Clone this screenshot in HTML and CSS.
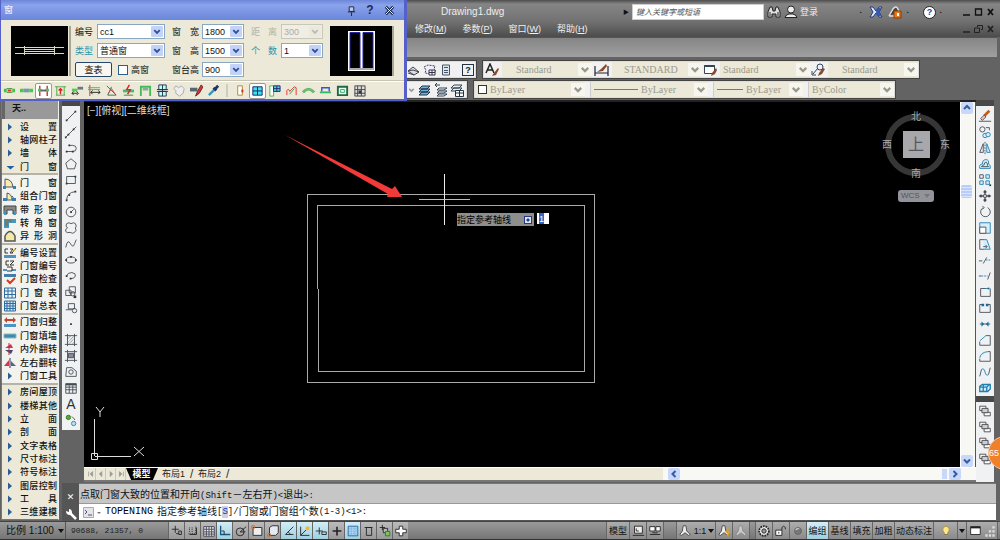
FILE: index.html
```html
<!DOCTYPE html>
<html lang="zh-CN">
<head>
<meta charset="utf-8">
<title>Drawing1.dwg</title>
<link rel="stylesheet" href="styles.css">
</head>
<body>
<svg class="defs" aria-hidden="true">
  <symbol id="chev" viewBox="0 0 12 12"><path d="M3 4.500l3 3 3-3" fill="none" stroke="currentColor" stroke-width="2"/></symbol>
  <symbol id="tri" viewBox="0 0 14 12"><path d="M5 2.500l4 3.500-4 3.500z" fill="#2b5f96"/></symbol>
  <symbol id="trid" viewBox="0 0 14 12"><path d="M3.500 5h8l-4 3.500z" fill="#1f5fa8"/></symbol>
  <symbol id="order" viewBox="0 0 16 16"><path d="M2 2.500h7v5H2zM7 9.500h7v4H7z" fill="#fff" stroke="#444"/><path d="M4.500 5h7v5h-7z" fill="#ccd" stroke="#444"/></symbol>
</svg>

<header class="top">
  <div class="titlebar">
    <h1>Drawing1.dwg</h1>
    <span class="flag">▶</span>
    <input class="search" type="text" aria-label="搜索" placeholder="键入关键字或短语">
    <button class="plain" aria-label="搜索"><svg width="14" height="14"><path d="M1 12V7l2-5h2l1 4h2l1-4h2l2 5v5H9V9H5v3z" fill="#ddd" stroke="#222"/><path d="M3 7v4M11 7v4" stroke="#222"/></svg></button>
    <button class="plain login"><svg width="14" height="14"><circle cx="7" cy="4.500" r="3.500" fill="#eee" stroke="#222"/><path d="M1 12.500q1-3 4-3.500h4q3 .5 4 3.500z" fill="#eee" stroke="#222"/></svg>登录</button>
    <div class="titletools">
      <span>▪</span>
      <button class="plain" aria-label="Exchange"><svg width="14" height="12"><path d="M1 1h3l3 4 3-4h3l-3 5 3 5h-3L7 7l-3 4H1l3-5z" fill="#dbe6ff" stroke="#223a78"/><path d="M8 2h4l-2 4 2 4H8L7 6z" fill="#3558b0"/></svg></button>
      <button class="plain" aria-label="保持连接"><svg width="15" height="14"><path d="M1 11l4-7q3-4 5 0l1 3M1 11h6" stroke="#ddd" fill="#444" stroke-width="1.500"/><path d="M6 6h7v7H6z" fill="#e8791c" stroke="#8a3d00"/><path d="M9 8h2v3H9z" fill="#fff"/></svg></button>
      <span>▪</span>
      <button class="plain helpbtn" aria-label="帮助">?</button>
      <span>▪</span>
    </div>
    <div class="winbtns"><button aria-label="最小化"><svg width="9" height="10"><path d="M1 8h7" stroke="#111" stroke-width="1.500"/></svg></button><button aria-label="最大化"><svg width="9" height="10"><path d="M1.500 2h6v6h-6z" fill="none" stroke="#111" stroke-width="1.300"/></svg></button><button aria-label="关闭"><svg width="9" height="10"><path d="M2 2l5 6M7 2L2 8" stroke="#111" stroke-width="1.800"/></svg></button></div>
  </div>
  <nav class="menubar">
    <a href="#">修改(<u>M</u>)</a><a href="#">参数(<u>P</u>)</a><a href="#">窗口(<u>W</u>)</a><a href="#">帮助(<u>H</u>)</a>
    <div class="winbtns"><button aria-label="最小化绘图"><svg width="9" height="10"><path d="M1 8h7" stroke="#222" stroke-width="1.500"/></svg></button><button aria-label="还原绘图"><svg width="9" height="10"><path d="M3.500 3V1.500h5v4H7M.5 4h5v4.500h-5z" fill="none" stroke="#222"/></svg></button><button aria-label="关闭绘图"><svg width="9" height="10"><path d="M2 2l5 6M7 2L2 8" stroke="#222" stroke-width="1.800"/></svg></button></div>
  </nav>
  <div class="strip"></div>
  <div class="bars">
    <div class="barrow">
      <div class="seg first">
        <button aria-label="标记"><svg width="13" height="12"><path d="M1 7l5-4 6 5-5 3zM1 7l5-1 6 2M1 9l6 2" fill="#ddd" stroke="#445"/></svg></button>
        <button aria-label="图纸集"><svg width="14" height="12"><path d="M1 3l4-2 7 1-1 3 2 2-5 3-6-1 1-3z" fill="#eef" stroke="#445" stroke-dasharray="2 1"/><path d="M6 6h6v5H6z" fill="#fff" stroke="#334"/><path d="M6 8.500h6M9 6v5" stroke="#334"/></svg></button>
        <button aria-label="计算器"><svg width="12" height="12"><path d="M2.500 1h7v10h-7z" fill="#dfe6ee" stroke="#456"/><path d="M4 3.500h4M4 6.500h4M4 8.500h4" stroke="#456"/></svg></button>
        <button class="bhelp" aria-label="帮助主题">?</button>
      </div>
      <div class="seg">
        <svg class="ic" width="15" height="14"><path d="M1 10L5 1l4 9M2.500 7h5" fill="none" stroke="#222" stroke-width="1.500"/><path d="M13 5l-4 5-2 3 4-1 3-6z" fill="#8a4a2a"/></svg>
        <span class="dd w90 in14"><select disabled aria-label="文字样式"><option>Standard</option></select><svg><use href="#chev"/></svg></span>
        <svg class="ic" width="17" height="14"><path d="M2 3v10M15 3v10M2 10h13" stroke="#223" stroke-width="1.200"/><path d="M13 1L8 6 4 9l6-1 4-5z" fill="#8a4a2a"/></svg>
        <span class="dd w90 in12"><select disabled aria-label="标注样式"><option>STANDARD</option></select><svg><use href="#chev"/></svg></span>
        <svg class="ic" width="15" height="14"><path d="M1.500 2.500h10v8h-10z" fill="#fff" stroke="#345"/><path d="M1.500 3h10" stroke="#345" stroke-width="2"/><path d="M13 5l-4 5-1 3 4-2 2-4z" fill="#8a4a2a"/></svg>
        <span class="dd w90"><select disabled aria-label="表格样式"><option>Standard</option></select><svg><use href="#chev"/></svg></span>
        <svg class="ic" width="15" height="14"><circle cx="9" cy="4" r="3" fill="#eef" stroke="#345"/><path d="M7 5l-5 6M1 8v4h4" stroke="#345" fill="none"/><path d="M12 5l-4 5-1 3 4-2 3-5z" fill="#8a4a2a"/></svg>
        <span class="dd w90 in14"><select disabled aria-label="多重引线样式"><option>Standard</option></select><svg><use href="#chev"/></svg></span>
      </div>
    </div>
    <div class="barrow">
      <div class="seg second">
        <svg class="tailchev"><use href="#chev"/></svg>
        <button aria-label="图层置为当前"><svg width="14" height="14"><path d="M4 3h8l-3 3H1zM4 6h8l-3 3H1zM4 9h8l-3 3H1z" fill="#6db3de" stroke="#234"/></svg></button>
        <button aria-label="上一个图层"><svg width="14" height="14"><path d="M5 5h8l-3 2H3zM5 8h8l-3 2H3zM5 11h8l-3 2H3zM1 2h5M1 2l2-2M1 2l2 2" fill="#fff" stroke="#345"/></svg></button>
        <button aria-label="图层状态"><svg width="14" height="14"><path d="M4 2h8l-3 3H1zM4 5h8l-3 3H1z" fill="#eee" stroke="#345"/><path d="M5.500 7.500h8v6h-8z" fill="#fff" stroke="#234"/><path d="M5 10h8M9.500 7v6" stroke="#234"/></svg></button>
      </div>
      <div class="seg">
        <span class="dd w110 swatch"><i></i><select disabled aria-label="颜色"><option>ByLayer</option></select><svg><use href="#chev"/></svg></span>
        <span class="dd w118"><b></b><select disabled aria-label="线型"><option>ByLayer</option></select><svg><use href="#chev"/></svg></span>
        <span class="dd w90"><b class="short"></b><select disabled aria-label="线宽"><option>ByLayer</option></select><svg><use href="#chev"/></svg></span>
        <span class="dd w86"><select disabled aria-label="打印样式"><option>ByColor</option></select><svg><use href="#chev"/></svg></span>
      </div>
    </div>
  </div>
</header>

<main class="work">
  <aside class="side">
    <h2>天..</h2>
    <div class="sidebody">
      <div class="grp g4 warm">
        <button><svg><use href="#tri"/></svg><span>设 置</span></button>
        <button><svg><use href="#tri"/></svg><span>轴网柱子</span></button>
        <button><svg><use href="#tri"/></svg><span>墙 体</span></button>
        <button><svg><use href="#trid"/></svg><span>门 窗</span></button>
      </div>
      <div class="grp g5">
        <button><svg viewBox="0 0 14 12"><path d="M2 10V2q7 0 8 8z" fill="#f7edb0" stroke="#556"/><path d="M0 9h3v3H0zM10 9h3v3h-3z" fill="#3d7fa8"/></svg><span>门 窗</span></button>
        <button><svg viewBox="0 0 14 12"><path d="M4 10V3q5 1 5 7zM9 6l3 4" fill="#f7edb0" stroke="#556"/><path d="M0 8h4v3H0zM9 8h4v3H9z" fill="#3d7fa8"/></svg><span>组合门窗</span></button>
        <button><svg viewBox="0 0 14 12"><path d="M1 2h12v8h-3V6H4v4H1z" fill="#888" stroke="#444"/><path d="M1 7h2v4H1zM11 7h2v4h-2z" fill="#3b9ac4"/></svg><span>带 形 窗</span></button>
        <button><svg viewBox="0 0 14 12"><path d="M1 2h12v4H6v5H1z" fill="#4796bd"/><path d="M2 2h7v3H5v4H2z" fill="#7a7a66"/></svg><span>转 角 窗</span></button>
        <button><svg viewBox="0 0 14 12"><path d="M2 11V6q5-9 10 0v5z" fill="#f5e9a8" stroke="#555" stroke-width="1.500"/></svg><span>异 形 洞</span></button>
      </div>
      <div class="grp g5">
        <button><svg viewBox="0 0 14 12"><path d="M1 8h12v3H1z" fill="#4f93c2"/><path d="M5 2H2v4h3M7 2h3L7 6h3M9 6l4-5" fill="none" stroke="#333"/><path d="M12 1l1 2-3 2z" fill="#e4b81f"/></svg><span>编号设置</span></button>
        <button><svg viewBox="0 0 14 12"><path d="M0 9h4v2H0zM9 9h4v2H9z" fill="#4f93c2"/><path d="M6 1H3v4h3M7 1h4L7 5h4M4 7h5v4H4" fill="none" stroke="#333"/></svg><span>门窗编号</span></button>
        <button><svg viewBox="0 0 14 12"><path d="M1 1h12v3H1z" fill="#3f7fa8"/><path d="M4 7l3 3 5-5" fill="none" stroke="#d23a1c" stroke-width="2"/></svg><span>门窗检查</span></button>
        <button><svg viewBox="0 0 14 12"><path d="M1.500 1h11v10h-11zM1 4h12M1 7.500h12M5 1v10M9 1v10" fill="#e8f3fb" stroke="#2e6ca0"/></svg><span>门 窗 表</span></button>
        <button><svg viewBox="0 0 14 12"><path d="M1.500 1h11v10h-11zM1 3.500h12M1 6h12M1 8.500h12M4 1v10M7 1v10M10 1v10" fill="#d5e8f6" stroke="#2e6ca0"/></svg><span>门窗总表</span></button>
      </div>
      <div class="grp g5">
        <button><svg viewBox="0 0 14 12"><path d="M1 8h12v3H1z" fill="#4f93c2"/><path d="M1 4l3-3v2h6V1l3 3-3 3V5H4v2z" fill="#c9402a"/></svg><span>门窗归整</span></button>
        <button><svg viewBox="0 0 14 12"><path d="M1 4h12v4H1z" fill="#3f88b0" stroke="#8bb"/></svg><span>门窗填墙</span></button>
        <button><svg viewBox="0 0 14 12"><path d="M2 5h8L8 1z" fill="#d7344a"/><path d="M2 7h8l-2 4z" fill="#447"/><path d="M6 0v12" stroke="#a34"/></svg><span>内外翻转</span></button>
        <button><svg viewBox="0 0 14 12"><path d="M1 9h5V3z" fill="#d7344a"/><path d="M8 9h5L8 4z" fill="#4a6a88"/><path d="M7 1v10" stroke="#336"/></svg><span>左右翻转</span></button>
        <button><svg><use href="#tri"/></svg><span>门窗工具</span></button>
      </div>
      <div class="grp g10 warm">
        <button><svg><use href="#tri"/></svg><span>房间屋顶</span></button>
        <button><svg><use href="#tri"/></svg><span>楼梯其他</span></button>
        <button><svg><use href="#tri"/></svg><span>立 面</span></button>
        <button><svg><use href="#tri"/></svg><span>剖 面</span></button>
        <button><svg><use href="#tri"/></svg><span>文字表格</span></button>
        <button><svg><use href="#tri"/></svg><span>尺寸标注</span></button>
        <button><svg><use href="#tri"/></svg><span>符号标注</span></button>
        <button><svg><use href="#tri"/></svg><span>图层控制</span></button>
        <button><svg><use href="#tri"/></svg><span>工 具</span></button>
        <button><svg><use href="#tri"/></svg><span>三维建模</span></button>
      </div>
    </div>
  </aside>

  <div class="center">
    <div class="upper">
      <div class="vbar drawbar">
        <button aria-label="直线"><svg viewBox="0 0 16 16"><path d="M3 13L13 3"/><path d="M2 12h2v2H2zM12 2h2v2h-2z" class="dot"/></svg></button>
        <button aria-label="构造线"><svg viewBox="0 0 16 16"><path d="M2 14L14 2"/><path d="M4 10h2v2H4zM10 4h2v2h-2zM1 13h2v2H1z" class="dot"/></svg></button>
        <button aria-label="多段线"><svg viewBox="0 0 16 16"><path d="M3 12h7a4 3.500 0 0 0 0-7H6"/><path d="M2 11h2v2H2zM5 4h2v2H5zM9 11h2v2H9z" class="dot"/></svg></button>
        <button aria-label="多边形"><svg viewBox="0 0 16 16"><path d="M8 2l6 5-2 6.500H4L2 7z"/></svg></button>
        <button aria-label="矩形"><svg viewBox="0 0 16 16"><path d="M3 4h10v8H3z"/><path d="M2 11h2v2H2zM12 3h2v2h-2z" class="dot"/></svg></button>
        <button aria-label="圆弧"><svg viewBox="0 0 16 16"><path d="M3 13q0-9 10-10"/><path d="M2 12h2v2H2zM12 2h2v2h-2zM5 6h2v2H5z" class="dot"/></svg></button>
        <button aria-label="圆"><svg viewBox="0 0 16 16"><circle cx="8" cy="8" r="5.500"/><path d="M8 8l3-3"/><path d="M7 7h2v2H7z" class="dot"/></svg></button>
        <button aria-label="修订云线"><svg viewBox="0 0 16 16"><path d="M4 8q-3-2-1-5 3-2 5 0 3-2 5 0 2 3 0 5 2 3-1 5-2 2-5 0-4 1-5-1-1-3 2-4z"/></svg></button>
        <button aria-label="样条曲线"><svg viewBox="0 0 16 16"><path d="M2 12q2-10 5-5t4 3 3-7"/></svg></button>
        <button aria-label="椭圆"><svg viewBox="0 0 16 16"><ellipse cx="8" cy="8" rx="5.500" ry="3.500"/><path d="M1.500 7h2v2h-2zM12.500 7h2v2h-2zM7 3.500h2v2H7z" class="dot"/></svg></button>
        <button aria-label="椭圆弧"><svg viewBox="0 0 16 16"><path d="M3 8q1-4 6-4 5 1 4 4t-5 3"/><path d="M2 7h2v2H2zM6.500 10h2v2h-2z" class="dot"/></svg></button>
        <button aria-label="插入块"><svg viewBox="0 0 16 16"><path d="M6 2h7v7H6zM2 6h6v6H2z"/><circle cx="10" cy="10" r="2.500"/><path d="M11 12h3v3h-3z" class="dot"/></svg></button>
        <button aria-label="创建块"><svg viewBox="0 0 16 16"><path d="M5 3h7v6H5zM2 10h7"/><circle cx="12" cy="11" r="2.500"/></svg></button>
        <button aria-label="点"><svg viewBox="0 0 16 16"><path d="M7 7h2v2H7z" class="dot"/></svg></button>
        <button aria-label="图案填充"><svg viewBox="0 0 16 16"><path d="M4 1v14M12 1v14M1 3h14M1 13h14"/><path d="M4 7l4-4M4 11l8-8M5 13l7-7M9 13l3-3" stroke-dasharray="1 1"/></svg></button>
        <button aria-label="渐变色"><svg viewBox="0 0 16 16"><path d="M4 1v14M12 1v14M1 3h14M1 13h14"/><path d="M5 5h6v5H5z" fill="#889"/></svg></button>
        <button aria-label="面域"><svg viewBox="0 0 16 16"><path d="M3 3h6l5 4v6H2z"/><circle cx="8" cy="8" r="2.500"/></svg></button>
        <button aria-label="表格"><svg viewBox="0 0 16 16"><path d="M2 3h12v11H2zM2 7h12M2 10h12M6 5v9M10 5v9"/><path d="M2 4h12" stroke-width="2"/></svg></button>
        <button aria-label="多行文字" class="bigA">A</button>
        <button aria-label="添加选定对象"><svg viewBox="0 0 16 16"><circle cx="5" cy="5" r="2.500" fill="#58a83a" stroke="#2d7a1d"/><circle cx="11" cy="12" r="2.500" fill="#b8def2" stroke="#2a80b5"/><path d="M9 4l3 3v1"/></svg></button>
      </div>

      <section class="window">
        <div class="viewrow">
          <div class="canvas">
            <svg class="drawing" width="876" height="365">
              <g fill="none" stroke="#aaa" shape-rendering="crispEdges">
                <path d="M223.500 187V92.500H510.500V280.500H223.500V187"/>
                <path d="M233.500 187V103.500H500.500V269.500H234.500V187"/>
                <path d="M360.500 72v51" stroke="#eee"/><path d="M335 97.500h51" stroke="#bbb"/>
              </g>
              <path d="M201 33l107 54 3-3 7 11-15 0 1-3z" fill="#f23a3a"/>
              <path d="M10.500 354V317M11 354.500H47M7.500 351.500h6v6h-6z" fill="none" stroke="#ddd"/>
              <path d="M12 305l4 5 4-5M16 310v5M50 345l10 9M60 345l-10 9" fill="none" stroke="#ddd"/>
              <circle cx="832" cy="43" r="28" fill="none" stroke="#363636" stroke-width="6"/>
              <path d="M819 29h27v27h-27z" fill="#a8a8ac"/>
              <rect x="814" y="88" width="36" height="12" rx="3" fill="#93939b"/><path d="M840 92h6l-3 4z" fill="#777"/>
            </svg>
            <span class="viewlabel">[−][俯视][二维线框]</span>
            <span class="cube north">北</span><span class="cube west">西</span><span class="cube top-face">上</span><span class="cube east">东</span><span class="cube south">南</span>
            <span class="wcs">WCS</span>
            <div class="prompt"><label for="dyn">指定参考轴线<i></i></label><input id="dyn" value="1"></div>
          </div>
          <div class="vscroll"><button aria-label="向上滚动"><svg><path d="M3 7l3-3 3 3" fill="none" stroke="#345c9e" stroke-width="2"/></svg></button><i></i><button aria-label="向下滚动"><svg><use href="#chev"/></svg></button></div>
        </div>
        <div class="tabs">
          <div class="navs"><button aria-label="首个"><svg viewBox="0 0 10 10"><path d="M2 2v6M7 2L4 5l3 3z"/></svg></button><button aria-label="上一个"><svg viewBox="0 0 10 10"><path d="M6 2L3 5l3 3z"/></svg></button><button aria-label="下一个"><svg viewBox="0 0 10 10"><path d="M4 2l3 3-3 3z"/></svg></button><button aria-label="末个"><svg viewBox="0 0 10 10"><path d="M3 2l3 3-3 3zM8 2v6"/></svg></button></div>
          <button class="tab on">模型</button><button class="tab">布局1</button><span>/</span><button class="tab">布局2</button><span>/</span>
          <div class="hscroll"><button aria-label="向左滚动"><svg viewBox="0 0 12 12"><path d="M7.500 3l-3 3 3 3" fill="none" stroke="currentColor" stroke-width="2"/></svg></button><i></i><button aria-label="向右滚动"><svg viewBox="0 0 12 12"><path d="M4.500 3l3 3-3 3" fill="none" stroke="currentColor" stroke-width="2"/></svg></button></div>
        </div>
      </section>

      <div class="rightbars">
        <div class="vbar">
          <button aria-label="删除"><svg viewBox="0 0 16 16"><path d="M1 14h14"/><path d="M13 2L7 8" stroke="#c65a1c" stroke-width="3"/><path d="M3 11l4-4 2 2-4 4z" fill="#f3c3b8"/></svg></button>
          <button aria-label="复制"><svg viewBox="0 0 16 16"><circle cx="5" cy="5" r="3"/><path d="M9 3h4v3"/><g class="b"><circle cx="8" cy="12" r="2.500"/><circle cx="11.500" cy="11" r="2.500"/></g></svg></button>
          <button aria-label="镜像"><svg viewBox="0 0 16 16"><path d="M6 3v10H2z"/><path d="M10 3v10h4z" class="b"/><path d="M8 1v14" stroke-dasharray="2 1"/></svg></button>
          <button aria-label="偏移"><svg viewBox="0 0 16 16"><path d="M2 13q-1-5 3-5 0-5 4-5t3 5q3 1 2 5z" class="b"/><path d="M4 11q1-2 3-2 0-3 2-3t2 4l1 1z"/></svg></button>
          <button aria-label="阵列"><svg viewBox="0 0 16 16"><path d="M2 2h4v4H2z"/><path d="M9 2h4v4H9zM2 9h4v4H2zM9 9h4v4H9z" class="b"/><path d="M13 13h2v2h-2z" class="dot"/></svg></button>
          <button aria-label="移动"><svg viewBox="0 0 16 16"><path d="M8 2v12M2 8h12M6.500 4L8 2l1.500 2M6.500 12L8 14l1.500-2M4 6.500L2 8l2 1.500M12 6.500L14 8l-2 1.500" stroke-width="1.500"/><path d="M6.500 6.500h3v3h-3z" fill="#fff"/></svg></button>
          <button aria-label="旋转"><svg viewBox="0 0 16 16"><path d="M6 3a5.500 5.500 0 1 0 5 0M5 1l2 2-2 2"/></svg></button>
          <button aria-label="缩放"><svg viewBox="0 0 16 16"><path d="M2 2h12v12H2z" class="b"/><path d="M2 7h7v7H2z" fill="#fff"/></svg></button>
          <button aria-label="拉伸"><svg viewBox="0 0 16 16"><path d="M7 14H2V3h5"/><path d="M6 3h4l4 11H7" class="b"/><path d="M6 11h4M8.500 9l2 2-2 2"/></svg></button>
          <button aria-label="修剪"><svg viewBox="0 0 16 16"><path d="M1 9h4M6 12l4-7"/><path d="M9 8h6" class="b" stroke-dasharray="2 1"/></svg></button>
          <button aria-label="延伸"><svg viewBox="0 0 16 16"><path d="M11 12l3-8M1 8h3"/><path d="M4 8h7" class="b" stroke-dasharray="2 1"/></svg></button>
          <button aria-label="打断于点"><svg viewBox="0 0 16 16"><path d="M3 4v9h11V4M3 4h6"/><path d="M8 4h5" class="b"/><path d="M11 3h2v2h-2z" class="bd"/></svg></button>
          <button aria-label="打断"><svg viewBox="0 0 16 16"><path d="M5 4H2v9h12V4h-3"/><path d="M4 3h3v3H4zM9 3h3v3H9z" class="bd"/></svg></button>
          <button aria-label="合并"><svg viewBox="0 0 16 16"><path d="M2 8h12"/><path d="M4 5l3 3-3 3zM12 5L9 8l3 3z" class="bd"/></svg></button>
          <button aria-label="倒角"><svg viewBox="0 0 16 16"><path d="M2 10v4h12V3H9"/><path d="M2 9l7-6" class="b"/></svg></button>
          <button aria-label="圆角"><svg viewBox="0 0 16 16"><path d="M2 11v3h12V3h-3"/><path d="M2 10q1-6 9-7" class="b"/></svg></button>
          <button aria-label="光顺曲线"><svg viewBox="0 0 16 16"><path d="M2 13l2-8M12 11l2-8"/><path d="M4 5q3-2 4 3t4 3" class="b"/></svg></button>
          <button aria-label="分解"><svg viewBox="0 0 16 16"><path d="M2 6l3-2h9v5l-3 3H2zM2 7h8v5M10 7l3-3M6 4v7" class="b" stroke-width="1.500"/></svg></button>
        </div>
        <div class="vbar clip">
          <button aria-label="前置"><svg><use href="#order"/></svg></button>
          <button aria-label="后置"><svg><use href="#order"/></svg></button>
          <button aria-label="置于对象之上"><svg><use href="#order"/></svg></button>
          <button aria-label="置于对象之下"><svg><use href="#order"/></svg></button>
        </div>
      </div>
    </div>

    <section class="command">
      <div class="cmdgrip"><button aria-label="关闭">✕</button><button aria-label="自定义"><svg width="12" height="12"><path d="M11 11L5 5" stroke="#fff" stroke-width="2.500"/><path d="M1 3q0 4 4 4l2-2Q7 1 4 1v3z" fill="#fff"/></svg></button></div>
      <div class="cmdlines">
        <p class="hist">点取门窗大致的位置和开向<span>(Shift</span>－左右开<span>)&lt;</span>退出<span>&gt;:</span></p>
        <p class="line"><svg width="22" height="11"><path d="M.5.500h10v10H.5z" fill="#e4e4ea" stroke="#aaa"/><path d="M2 3l2 2-2 2M5 8h4" fill="none" stroke="#556"/><path d="M14 5h4l-2 2z" fill="#777"/></svg><strong>TOPENING</strong> 指定参考轴线<span>[</span><a href="#">S</a><span>]/</span>门窗或门窗组个数<span>(1-3)&lt;1&gt;:</span></p>
      </div>
    </section>
  </div>
</main>

<footer class="status">
  <button class="scale">比例 1:100 <i></i></button>
  <output>90688, 21357, 0</output>
  <div class="toggles">
    <button aria-label="推断约束"><svg viewBox="0 0 16 16"><path d="M2 6h8M6 2v8M10 8h3v4h-3zM7 11h3"/></svg></button>
    <button aria-label="捕捉"><svg viewBox="0 0 16 16"><path d="M4 4v6M7 4v6M3 11h9M11 3v8" stroke-dasharray="1 1"/><path d="M4 12h8V4"/></svg></button>
    <button aria-label="栅格"><svg viewBox="0 0 16 16"><path d="M2 3h12v11H2zM2 6h12M2 9h12M2 11.500h12M5 3v11M8 3v11M11 3v11" stroke="#445" fill="#eee"/></svg></button>
    <button class="on" aria-label="正交"><svg viewBox="0 0 16 16"><path d="M3 2v10h11" stroke="#19577d" stroke-width="1.500"/><path d="M4 8h3v4"/></svg></button>
    <button aria-label="极轴"><svg viewBox="0 0 16 16"><circle cx="7" cy="9" r="4.500"/><path d="M7 9l7-6M7 9h6"/></svg></button>
    <button aria-label="对象捕捉"><svg viewBox="0 0 16 16"><path d="M3.500 4h10v9h-10z" fill="#eee"/><path d="M2 2h3v3H2z" stroke="#c77136"/></svg></button>
    <button aria-label="三维对象捕捉"><svg viewBox="0 0 16 16"><path d="M4 4l3-2h7v8l-3 3H4z" fill="#e6e8f2"/><path d="M2 11h3v3H2z" stroke="#c77136"/></svg></button>
    <button class="on" aria-label="对象追踪"><svg viewBox="0 0 16 16"><path d="M13 3l-9 9h9M7 9l3 3"/></svg></button>
    <button class="on" aria-label="动态UCS"><svg viewBox="0 0 16 16"><path d="M3 3v10h10M3 13l8-8"/><path d="M9 3h4v4H9z" fill="#f0b532" stroke="none"/></svg></button>
    <button class="on" aria-label="动态输入"><svg viewBox="0 0 16 16"><path d="M2 8h8M6 4v8M9 9h5v3H9z"/></svg></button>
    <button aria-label="线宽"><svg viewBox="0 0 16 16"><path d="M3 8h10M8 3v10" stroke-width="1.800"/></svg></button>
    <button class="on" aria-label="透明度"><svg viewBox="0 0 16 16"><path d="M2.500 2.500h11v11h-11z" fill="#a8d4f4" stroke="#245f9a"/><path d="M4 5h9M4 8h9M4 11h9M6 4v9M10 4v9" stroke="#74a8d8" stroke-dasharray="1 1"/></svg></button>
    <button aria-label="快捷特性"><svg viewBox="0 0 16 16"><path d="M5 4h6v9H5zM3 4h9"/></svg></button>
    <button aria-label="选择循环"><svg viewBox="0 0 16 16"><path d="M2 4h6M5 1v6"/><path d="M6 5h5v5H6z" fill="#bbb"/><path d="M8.500 8.500h5v5h-5z" fill="#7cc45c" stroke="#2d7a1d"/></svg></button>
    <button aria-label="注释监视器"><svg viewBox="0 0 16 16"><path d="M6 2.500h4V6h4v4h-4v3.500H6V10H2V6h4z" fill="#fff"/></svg></button>
  </div>
  <div class="rgroup">
    <button>模型</button>
    <button aria-label="快速查看布局"><svg viewBox="0 0 16 16"><path d="M4 2.500h9v8H4zM2 13h13" fill="#eee"/><path d="M6 5v3h3" /></svg></button>
    <button aria-label="快速查看图形"><svg viewBox="0 0 16 16"><path d="M2 3h6v5H2zM9 3h5v5H9zM2 12h12M5 10h6" fill="#fff"/></svg></button>
  </div>
  <div class="rgroup near">
    <button class="anno"><svg viewBox="0 0 16 16"><path d="M6 2h3l1 6 4 4-2 1-4-3-4 3-2-1 3-4z" fill="#eee" stroke="#444"/></svg>1:1<i></i></button>
    <button aria-label="注释可见性"><svg viewBox="0 0 16 16"><path d="M6 2h3l1 6 4 4-2 1-4-3-4 3-2-1 3-4z" fill="#eee" stroke="#444"/><path d="M13 5l-2 4h3l-2 5" stroke="#e0a21a" stroke-width="2"/></svg></button>
    <button aria-label="自动缩放"><svg viewBox="0 0 16 16"><path d="M6 2h3l1 6 4 4-2 1-4-3-4 3-2-1 3-4z" fill="#ccc" stroke="#888"/></svg></button>
  </div>
  <div class="rgroup last">
    <button aria-label="切换工作空间"><svg viewBox="0 0 16 16"><circle cx="8" cy="8" r="5.500" fill="#eee" stroke-dasharray="2 1" stroke-width="2"/><circle cx="8" cy="8" r="2.500" fill="#999"/></svg></button>
    <button aria-label="锁定"><svg viewBox="0 0 16 16"><path d="M2 7h7v6H2z" fill="#fff"/><path d="M9 7V4q2-3 4 0v2M5.500 9v2"/></svg></button>
    <button aria-label="硬件加速"><svg viewBox="0 0 16 16"><circle cx="8" cy="8" r="4" fill="#777" stroke="#666"/><path d="M5 7q0-3 5-2z" fill="#eee" stroke="none"/></svg></button>
    <button class="on">编组</button><button>基线</button><button>填充</button><button>加粗</button><button>动态标注</button>
    <button class="bulb" aria-label="隔离对象"><svg viewBox="0 0 16 16"><path d="M6 10q-3-3-1-6 3-3 6 0 2 3-1 6v3H6z" fill="#ffe88a" stroke="#a98a30"/><path d="M6 12h4" stroke="#666"/></svg></button>
    <button class="more" aria-label="菜单"><i></i></button>
    <button aria-label="全屏显示"><svg viewBox="0 0 16 16"><path d="M3 3h11v9H3z" fill="#fff"/><path d="M3 4h11" stroke-width="2"/></svg></button>
    <span class="sizer"><svg viewBox="0 0 12 12"><path d="M8 2h2M5 5.500h2M8 5.500h2M2 9h2M5 9h2M8 9h2" stroke="#ddd" stroke-width="2"/></svg></span>
  </div>
</footer>

<a class="ball" href="#">65</a>

<form class="dialog" onsubmit="return false">
  <div class="dtitle"><span>窗</span><button type="button" aria-label="固定"><svg viewBox="0 0 12 12"><path d="M3.500 2h5v5h-5zM2 7.500h8M6 8v4" fill="#b9c8ee" stroke="#223"/></svg></button><button type="button" class="q" aria-label="帮助">?</button><button type="button" aria-label="关闭"><svg viewBox="0 0 12 12"><path d="M2 2l8 8M10 2l-8 8" stroke="#1c2a50" stroke-width="3"/><path d="M2 2l8 8M10 2l-8 8" stroke="#fff"/></svg></button></div>
  <div class="dbody">
    <svg class="preview" width="60" height="50"><path d="M0 0h57v50H0z"/><path d="M4 21.500h49M4 27.500h49M13 23.500h30M13 25.500h30M13.500 20v9M43.500 20v9" stroke="#d8dcb8"/></svg>
    <div class="fields main">
      <label for="f1">编号</label><span class="cb w68"><select id="f1"><option>cc1</option></select><svg><use href="#chev"/></svg></span>
      <label for="f2" class="lnk">类型</label><span class="cb w68"><select id="f2"><option>普通窗</option></select><svg><use href="#chev"/></svg></span>
      <div class="pair"><button type="button" class="xp">查表</button><input type="checkbox" id="hi"><label for="hi">高窗</label></div>
    </div>
    <div class="fields dims">
      <label for="f3">窗 宽</label><span class="cb w42"><select id="f3"><option>1800</option></select><svg><use href="#chev"/></svg></span>
      <label for="f4">窗 高</label><span class="cb w42"><select id="f4"><option>1500</option></select><svg><use href="#chev"/></svg></span>
      <label for="f5">窗台高</label><span class="cb w42"><select id="f5"><option>900</option></select><svg><use href="#chev"/></svg></span>
    </div>
    <div class="fields dims">
      <label for="f6" class="off">距 离</label><span class="cb w42 off"><select id="f6" disabled><option>300</option></select><svg><use href="#chev"/></svg></span>
      <label for="f7" class="lnk">个 数</label><span class="cb w42"><select id="f7"><option>1</option></select><svg><use href="#chev"/></svg></span>
    </div>
    <svg class="preview" width="64" height="50"><path d="M0 0h62v50H0z"/><path d="M18 5h27v40H18z" fill="#fff"/><path d="M20 6.500h10v37H20zM33 6.500h10v37H33z" stroke="#2525a0"/><path d="M19 43h25" stroke="#aaa" stroke-width="2"/></svg>
  </div>
  <div class="dtools">
    <button type="button" aria-label="自由插入"><svg viewBox="0 0 14 14"><path d="M1 5h3v4H1zM10 5h3v4h-3z" fill="#3c3"/><path d="M4 5h6M4 9h6" stroke="#383"/><path d="M5 7h4" stroke="#d33" stroke-width="2"/></svg></button>
    <button type="button" aria-label="顺序插入"><svg viewBox="0 0 14 14"><path d="M0 5h4v4H0zM10 5h4v4h-4z" fill="#4c4"/><path d="M4 5h6v4H4z" fill="#79a"/></svg></button>
    <button type="button" class="sel" aria-label="轴线等分"><svg viewBox="0 0 14 14"><path d="M3 2v11M11 2v11" stroke="#c33" stroke-width="1.500"/><path d="M1 5h4v3H1zM9 5h4v3H9z" fill="#6b6"/><path d="M4 6h6v2H4z" fill="#567"/></svg></button>
    <button type="button" aria-label="墙段等分"><svg viewBox="0 0 14 14"><path d="M1 3h12M2 12h10M3 3v9M11 3v9" stroke="#4a4"/><path d="M7 5v6M5 7l2-2 2 2" fill="none" stroke="#d22" stroke-width="1.500"/></svg></button>
    <button type="button" aria-label="垛宽定距"><svg viewBox="0 0 14 14"><path d="M7 3h6v3H7z" fill="#678"/><path d="M1 5h6v3H1z" fill="#5c5"/><path d="M1 10h6M3 8L1 10l2 2M6 8l2 2-2 2" stroke="#222" fill="none"/></svg></button>
    <button type="button" aria-label="轴线定距"><svg viewBox="0 0 14 14"><path d="M2 1v12" stroke="#b33"/><path d="M0 4h13M0 6h13" stroke="#4b4"/><path d="M3 9h10M5 7L3 9l2 2M11 7l2 2-2 2" stroke="#222" fill="none"/></svg></button>
    <button type="button" aria-label="角度插入"><svg viewBox="0 0 14 14"><path d="M2 2l10 10H3L7 3" fill="none" stroke="#375"/><path d="M3 11l4-6 4 6" fill="none" stroke="#c44"/></svg></button>
    <button type="button" aria-label="智能插入"><svg viewBox="0 0 14 14"><path d="M1 6h12v3H1z" fill="#4b7"/><path d="M8 1L5 6h4l-3 5" stroke="#d22" fill="none" stroke-width="1.500"/><path d="M2 12h10" stroke="#383"/></svg></button>
    <button type="button" aria-label="满墙插入"><svg viewBox="0 0 14 14"><path d="M2 13V3h10v10" fill="none" stroke="#4b5" stroke-width="2"/><path d="M4 4h6v3H4z" fill="#8a9"/></svg></button>
    <button type="button" aria-label="上层插入"><svg viewBox="0 0 14 14"><path d="M3 1h8v5H3zM3 8h8v5H3zM7 1v12M1 6h12M1 8h12" fill="#bfe" stroke="#235"/></svg></button>
    <button type="button" aria-label="构件"><svg viewBox="0 0 14 14"><path d="M3 2l3 2 3-2 3 3-1 5-4 3-4-3V7L1 5z" fill="#eee" stroke="#aaa"/></svg></button>
    <button type="button" aria-label="替换"><svg viewBox="0 0 14 14"><path d="M0 4h8v4H0z" fill="#567"/><path d="M12 1l-4 7-2 5 4-3 4-7z" fill="#d33" stroke="#622"/></svg></button>
    <button type="button" aria-label="拾取"><svg viewBox="0 0 14 14"><path d="M2 12l6-6" stroke="#39b" stroke-width="2.500"/><path d="M7 4l3 3M9 5l3-3" stroke="#236" stroke-width="3"/></svg></button>
    <span class="vsep"></span>
    <button type="button" aria-label="插门"><svg viewBox="0 0 14 14"><path d="M4 2h5v10H4z" fill="#fff" stroke="#a83"/><path d="M9 6v3" stroke="#d22" stroke-width="2"/></svg></button>
    <button type="button" class="sel" aria-label="插窗"><svg viewBox="0 0 14 14"><path d="M2 3h10v9H2zM7 3v9M2 7.500h10" fill="#3fe3ee" stroke="#126"/></svg></button>
    <button type="button" aria-label="门连窗"><svg viewBox="0 0 14 14"><path d="M2 2h4v11H2z" fill="#fff" stroke="#4b4"/><path d="M6 2h7v6H6zM9.500 2v6M6 5h7" fill="#4dc" stroke="#227"/></svg></button>
    <button type="button" aria-label="子母门"><svg viewBox="0 0 14 14"><path d="M2 12V7q2-3 3 1l5-5 2 1v8" fill="none" stroke="#d33"/><path d="M5 11l5-6" stroke="#3a3"/></svg></button>
    <button type="button" aria-label="弧窗"><svg viewBox="0 0 14 14"><path d="M1 9q6-7 12 0" fill="none" stroke="#5b5" stroke-width="3"/><path d="M1 9q6-7 12 0" fill="none" stroke="#9ab"/></svg></button>
    <button type="button" aria-label="凸窗"><svg viewBox="0 0 14 14"><path d="M3 8V4h8v4" fill="none" stroke="#35c" stroke-width="1.500"/><path d="M1 9h12" stroke="#3b6" stroke-width="2"/></svg></button>
    <button type="button" aria-label="洞口"><svg viewBox="0 0 14 14"><path d="M2 3h10v9H2z" fill="#dff" stroke="#264" stroke-width="2"/><path d="M5 6h4v3H5z" fill="#fff" stroke="#3a5"/></svg></button>
    <button type="button" aria-label="标准库"><svg viewBox="0 0 14 14"><path d="M2 2h11v11H2zM5 2v11M9 2v11M2 6h11M2 10h11" fill="#ddd" stroke="#444"/><path d="M6 7h3v3H6z" fill="#333"/></svg></button>
  </div>
</form>
</body>
</html>
```

FILE: styles.css
```css
* { box-sizing: border-box; }
html, body { height: 100%; }
body {
  margin: 0;
  display: flex;
  flex-direction: column;
  background: #636363;
  color: #111;
  font: 9px/12px "Liberation Sans", "Noto Sans CJK SC", sans-serif;
  overflow: hidden;
}
button, input, select { font: inherit; color: inherit; margin: 0; padding: 0; border: 0; background: none; border-radius: 0; }
button { display: flex; align-items: center; justify-content: center; white-space: nowrap; }
select { appearance: none; opacity: 1; }
h1, h2, p { margin: 0; font-size: inherit; font-weight: normal; }
a { color: inherit; text-decoration: none; }
svg { display: block; flex: none; }
.defs { position: absolute; width: 0; height: 0; }

/* title, menus and tool rows */
.top { display: flex; flex-direction: column; }
.titlebar { display: flex; align-items: center; height: 21px; padding: 3px 5px 0 441px; background: linear-gradient(#4e4e4e, #858585 4px, #727272); color: #eee; }
.titlebar h1 { width: 182px; font-size: 10px; }
.flag { width: 9px; font-size: 6px; color: #111; }
.search { width: 132px; height: 16px; padding: 0 3px; background: #fff; border: 1px solid #ccc; font-size: 8px; font-style: italic; color: #555; }
.search::placeholder { color: #555; }
.titlebar .plain { margin-left: 3px; }
.login { gap: 2px; }
.titletools { display: flex; align-items: center; gap: 2px; margin-left: auto; }
.titletools span { width: 6px; font-size: 5px; color: #222; text-align: center; }
.titletools .helpbtn { width: 13px; height: 13px; margin-left: 10px; border-radius: 50%; border: 1px solid #222; background: #fff; color: #1b3f8c; font-weight: bold; }
.winbtns { display: flex; gap: 3px; margin-left: 18px; }
.menubar { display: flex; align-items: center; gap: 16px; height: 16px; padding: 0 5px 0 415px; background: linear-gradient(#727272, #4c4c4c); color: #f0f0f0; }
.menubar .winbtns { margin-left: auto; }
.strip { height: 20px; margin-right: 3px; background: linear-gradient(#858585, #a0a0a0); border-top: 1px solid #555; }
.bars { display: flex; flex-direction: column; gap: 3px; padding: 4px 0 2px 406px; }
.barrow { display: flex; gap: 7px; height: 17px; }
.seg { display: flex; align-items: center; background: #f1f1f1; border: 1px solid #ddd; outline: 1px solid #444; }
.seg.first { width: 70px; gap: 3px; }
.bhelp { width: 12px; height: 12px; margin-left: 7px; border: 1px solid #234; font-weight: bold; }
.seg.second { width: 61px; gap: 2px; }
.ic { margin: 0 2px 0 1px; }
.dd { display: flex; align-items: center; height: 15px; background: #ece9d8; color: #9b998c; }
.dd + .dd { margin-left: 5px; border-left: 1px solid #ccc; }
.dd select { flex: 1; min-width: 0; padding-left: 3px; font: 10px/12px "Liberation Serif", serif; color: #9b998c; }
.dd svg { width: 14px; height: 13px; background: #f6f5ee; }
.tailchev { width: 9px; height: 12px; color: #999; }
.w90 { width: 90px; } .w110 { width: 110px; } .w118 { width: 118px; } .w86 { width: 86px; }
.in14 select { padding-left: 14px; }
.in12 select { padding-left: 12px; }
.dd i { width: 9px; height: 9px; margin-left: 3px; border: 1px solid #333; background: #fff; }
.dd b { width: 44px; height: 1px; margin-left: 3px; background: #777; }
.dd b.short { width: 26px; }

/* work area */
.work { flex: 1; display: flex; min-height: 0; }
.side { width: 58px; margin: 0 3px 1px 1px; display: flex; flex-direction: column; background: #ddd; border: 1px solid #777; border-right-color: #eee; }
.side h2 { height: 18px; padding: 1px 0 0 7px; background: #999; border-left: 3px solid #666; font-weight: bold; }
.sidebody { flex: 1; display: flex; flex-direction: column; background: #f2f2ee; }
.grp { display: flex; flex-direction: column; min-height: 0; border-bottom: 2px solid #b5b3a8; padding-top: 1px; }
.grp:last-child { border-bottom: 0; }
.g4 { flex: 4; } .g5 { flex: 5; } .g10 { flex: 10; }
.warm { background: #ece9d8; }
.grp button { flex: 1; min-height: 0; gap: 3px; justify-content: flex-start; padding-left: 1px; font-weight: 500; }
.grp svg { width: 14px; height: 12px; }
.grp span { width: 37px; text-align: justify; text-align-last: justify; white-space: nowrap; }
.center { flex: 1; min-width: 0; display: flex; flex-direction: column; margin-right: 4px; }
.upper { flex: 1; min-height: 0; display: flex; }
.vbar { display: flex; flex-direction: column; width: 18px; background: #f0f1f3; border-top: 6px solid #484848; }
.vbar button { height: 16px; flex: none; }
.vbar svg { width: 14px; height: 14px; fill: none; stroke: #444b52; }
.vbar .dot { fill: #333; stroke: none; }
.vbar .b { stroke: #1f7fb0; fill: #d5eef8; }
.vbar .bd { fill: #136a9e; stroke: none; }
.drawbar { align-self: flex-start; padding: 2px 0; margin-right: 4px; }
.bigA { font-size: 14px; color: #333; }
.window { flex: 1; min-width: 0; display: flex; flex-direction: column; border-top: 2px solid #222; border-bottom: 2px solid #777; }
.viewrow { flex: 1; display: flex; min-height: 0; }
.canvas { flex: 1; position: relative; background: #000; overflow: hidden; }
.drawing { position: absolute; left: 0; top: 0; }
.viewlabel { position: absolute; left: 3px; top: 3px; font-size: 10px; color: #ddd; }
.cube { position: absolute; font-size: 10px; color: #aaa; }
.north { left: 827px; top: 9px; } .south { left: 827px; top: 66px; }
.west { left: 798px; top: 37px; } .east { left: 856px; top: 37px; }
.top-face { left: 824px; top: 35px; font-size: 16px; line-height: 16px; color: #555860; }
.wcs { position: absolute; left: 817px; top: 88px; font-size: 8px; color: #55555c; }
.prompt { position: absolute; left: 373px; top: 111px; display: flex; gap: 3px; align-items: flex-start; }
.prompt label { display: flex; align-items: center; justify-content: space-between; width: 77px; height: 13px; padding-right: 2px; background: #8e8e8e; color: #000; }
.prompt label i { width: 8px; height: 8px; border: 1px solid #223a88; background: radial-gradient(#223a88 1px, #dfe4f5 2px); }
.prompt input { width: 12px; height: 11px; padding: 0 2px; background: linear-gradient(90deg, #fff 2px, #3467c0 2px, #3467c0 7px, #fff 7px); color: #fff; }
.vscroll { width: 16px; display: flex; flex-direction: column; padding-right: 3px; background: #f7f7f3; border-left: 1px solid #fff; border-right: 1px solid #555; color: #345c9e; }
.vscroll button, .hscroll button { width: 12px; height: 12px; background: #c9d8fa; border-radius: 2px; }
.vscroll svg, .hscroll svg { width: 12px; height: 12px; }
.vscroll i { width: 11px; height: 13px; margin: 71px 0 auto; background: repeating-linear-gradient(#b9cdf8 0 2px, #d9e4fd 2px 3px); border-radius: 2px; }
.tabs { display: flex; align-items: center; height: 13px; background: #ece9d8; border-top: 1px solid #fff; font-size: 9px; }
.navs { display: flex; padding-left: 2px; }
.navs button { width: 10px; height: 12px; border-right: 1px solid #c9c7ba; }
.navs svg { width: 8px; height: 8px; fill: #999; stroke: #999; }
.tab { height: 12px; padding: 0 5px 0 4px; color: #222; }
.tab.on { background: #000; color: #fff; width: 32px; clip-path: polygon(0 0, 100% 0, 84% 100%, 16% 100%); font-weight: bold; }
.tab + span { width: 4px; font-size: 12px; color: #333; }
.hscroll { flex: 0 1 313px; display: flex; margin-left: auto; padding: 0 15px 0 5px; background: #f8f8f5; color: #345c9e; }
.hscroll i { width: 5px; margin: 1px 2px 1px auto; background: #c9d8fa; }
.rightbars { display: flex; flex-direction: column; width: 20px; min-height: 0; }
.rightbars .vbar { margin-right: 2px; padding-top: 2px; }
.rightbars .clip { flex: 1 0 0; min-height: 0; overflow: hidden; padding-top: 1px; }
.command { display: flex; height: 38px; margin-top: 1px; background: #555; }
.cmdgrip { display: flex; flex-direction: column; justify-content: flex-end; gap: 5px; width: 17px; padding-bottom: 1px; align-items: center; color: #fff; background: #555; }
.cmdgrip button { height: 12px; font-family: "DejaVu Sans", sans-serif; }
.cmdlines { flex: 1; border-top: 1px solid #777; font-size: 10px; line-height: 14px; white-space: nowrap; }
.cmdlines span, .cmdlines a { font-family: "Liberation Mono", monospace; font-size: 9px; }
.hist { height: 20px; padding: 4px 1px 0; background: #c6c6c6; border-bottom: 1px solid #999; }
.line { display: flex; align-items: center; height: 16px; padding-left: 4px; background: #fff; }
.line strong { margin-right: 4px; font-family: "Liberation Mono", monospace; font-weight: normal; color: #000; }
.line a { background: #cfcfe4; color: #2233a0; line-height: 12px; }

/* status bar */
.status { display: flex; height: 19px; padding: 0 2px 0 5px; align-items: stretch; background: linear-gradient(#9a9a9a, #757575); border-top: 1px solid #444; border-bottom: 1px solid #333; }
.status i { width: 0; border: 3px solid transparent; border-top: 4px solid #111; border-bottom: 0; }
.scale { width: 61px; gap: 4px; border-right: 1px solid #555; font-size: 10px; }
.status output { width: 102px; padding: 4px 0 0 5px; font: 8px/10px "Liberation Mono", monospace; color: #222; }
.toggles, .rgroup { display: flex; }
.status button + button { border-left: 1px solid #666; }
.toggles button { width: 16px; border-right: 0; background: linear-gradient(#bbb, #999); }
.toggles button:first-child { border-left: 1px solid #666; }
.status svg { width: 14px; height: 14px; fill: none; stroke: #222; }
.status .on { background: linear-gradient(#d3eef6, #9fcfe0); }
.toggles + .rgroup { margin-left: auto; }
.rgroup { margin-right: 12px; border: 1px solid #666; border-width: 0 1px; background: linear-gradient(#adadad, #8a8a8a); }
.rgroup button { min-width: 16px; padding: 0 1px; }
.rgroup button:not(:has(svg)):not(.more) { width: 22px; font-size: 9px; }
.rgroup button:nth-child(8):not(:has(svg)) { width: 39px; }
.rgroup .anno { width: 38px; gap: 2px; }
.rgroup.near { margin-right: 5px; }
.rgroup.last { margin-right: 0; }
.rgroup.last .bulb { width: 24px; }
.rgroup.last .more { min-width: 0; width: 9px; padding: 0; }
.sizer { display: flex; align-items: flex-end; }

.ball { position: absolute; right: -22px; top: 436px; width: 34px; height: 34px; border-radius: 50%; border: 1px solid #f5c39a; background: #f0802a; color: #fff; font-size: 9px; line-height: 32px; }

/* floating window-insert panel */
.dialog { position: absolute; left: 0; top: 0; width: 407px; background: #ece9d8; border: solid #5560c8; border-width: 0 3px 2px 1px; }
.dtitle { display: flex; align-items: center; gap: 7px; height: 20px; padding: 0 9px 0 3px; background: linear-gradient(#6d86d8, #89a3ec 5px, #7590e0 15px, #6a86da); color: #fff; }
.dtitle span { margin-right: auto; }
.dtitle button { width: 12px; }
.dtitle svg { width: 11px; height: 11px; fill: none; }
.dtitle .q { font-size: 12px; font-weight: bold; color: #1c2a50; }
.dbody { display: flex; height: 61px; padding: 4px 0 0 10px; border-bottom: 1px solid #c9c5b4; }
.preview { margin-top: 2px; height: 50px; border-right: 2px solid #aaa796; }
.fields { display: grid; align-content: start; align-items: center; grid-auto-rows: 15px; row-gap: 4px; }
.fields.main { grid-template-columns: 22px 68px; margin-left: 4px; }
.fields.dims { grid-template-columns: 30px 42px; margin-left: 7px; }
.fields.dims label { width: 27px; text-align: justify; text-align-last: justify; white-space: nowrap; }
.fields.dims + .preview { margin-left: 7px; }
.dims + .dims label { width: 26px; }
.lnk { color: #2a93ad; }
label.off { color: #b5b2a4; }
.cb { display: flex; height: 15px; padding: 1px; background: #fff; border: 1px solid #8aa6c0; color: #2f4f96; }
.cb select { flex: 1; min-width: 0; padding-left: 1px; color: #111; }
.cb svg { width: 12px; height: 11px; background: #c3d3f8; border-radius: 1px; }
.cb.off { background: #f0eee2; border-color: #c9c7ba; color: #bbb; }
.cb.off select { color: #aaa; }
.cb.off svg { background: #ebe9dc; }
.pair { grid-column: 1 / -1; display: flex; align-items: center; }
.xp { width: 37px; height: 15px; background: #f7f6f0; border: 1px solid #26466e; border-radius: 2px; }
.pair input { appearance: none; width: 10px; height: 10px; margin: 0 3px 0 6px; background: #fff; border: 1px solid #2e5f8c; }
.dtools { display: flex; align-items: center; height: 18px; border-top: 1px solid #fff; }
.dtools button { width: 17px; height: 16px; }
.dtools svg { width: 13px; height: 13px; }
.dtools .sel { background: #fff; border: 1px solid #9a9a9a; border-radius: 2px; }
.vsep { width: 2px; height: 13px; margin: 0 4px; border: 1px solid #cfccbc; }
```
